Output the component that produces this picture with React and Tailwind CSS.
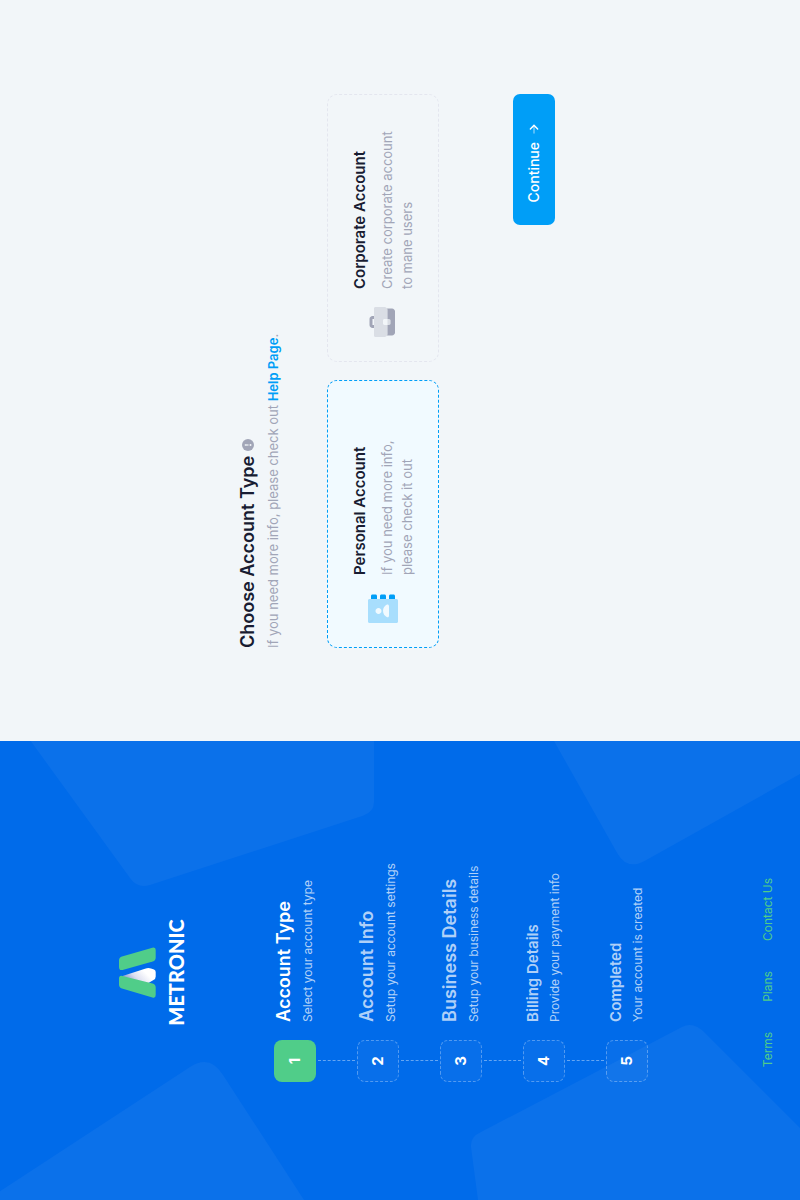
import { useState } from 'react';

const steps = [
  { title: 'Account Type', text: 'Select your account type' },
  { title: 'Account Info', text: 'Setup your account settings' },
  { title: 'Business Details', text: 'Setup your business details' },
  { title: 'Billing Details', text: 'Provide your payment info', small: true },
  { title: 'Completed', text: 'Your account is created', small: true },
];

function Backdrop() {
  return (
    <svg
      className="absolute inset-0 h-full w-full"
      viewBox="0 0 459 800"
      preserveAspectRatio="xMidYMid slice"
      fill="#ffffff"
      fillOpacity="0.045"
      aria-hidden="true"
    >
      <path d="M459 30.7L322 130Q311 137.7 315 150L384.3 363Q388 374 398 374H459Z" />
      <path d="M8.7 0L133 190Q146 210 125 223L0 304V0Z" />
      <path d="M0 478L53 471Q63 470 68 481L173 682Q179 693.5 167 705L72 800H0Z" />
      <path d="M459 554L346.7 617.3Q329.3 627.2 339.3 645L426 800H459Z" />
    </svg>
  );
}

function Logo() {
  return (
    <a href="#home" className="flex flex-col items-center gap-2 text-white">
      <svg className="h-[37px] w-[51px]" viewBox="0 0 51 37" aria-hidden="true">
        <defs>
          <linearGradient id="fold" x1="14" y1="12" x2="27" y2="25" gradientUnits="userSpaceOnUse">
            <stop offset="0" stopColor="#8f9fd0" />
            <stop offset="0.45" stopColor="#dcdff0" />
            <stop offset="1" stopColor="#ffffff" />
          </linearGradient>
        </defs>
        <path
          d="M21.5 2L29.3 26Q30.5 29.500 29.500 32L28.500 35Q27.800 36.700 26 36.700H21.500Q19 36.700 18 34.500L13 26Z"
          fill="url(#fold)"
        />
        <path
          d="M13.500 0H19.500Q22.800 0 22 3.500L14.600 33.500Q13.800 36.700 10.500 36.700H3Q-.500 36.700 .500 33.400L9.500 3Q10.500 0 13.500 0Z"
          fill="#50cd89"
        />
        <path
          d="M31 0H37.500Q40.500 0 41.400 3L50.300 33.400Q51.200 36.700 48 36.700H40.500Q37.400 36.700 36.500 33.700L28.100 3.600Q27.200 0 31 0Z"
          fill="#50cd89"
        />
      </svg>
      <span className="font-[Lato,sans-serif] text-xl leading-6 font-black">METRONIC</span>
    </a>
  );
}

function Step({ step, number, last }) {
  const active = number === 1;
  return (
    <li className="flex gap-[18px]">
      <div className="flex flex-col items-center">
        <span
          className={
            'flex size-[42px] items-center justify-center rounded-lg text-[15px] font-bold text-white ' +
            (active ? 'bg-[#50cd89]' : 'border border-dashed border-white/30 bg-white/[0.03]')
          }
        >
          {number}
        </span>
        {!last && <span className="my-0.5 h-[37px] border-l border-dashed border-white/40" />}
      </div>
      <div className="flex h-[42px] flex-col justify-center gap-0.5 whitespace-nowrap">
        <h3
          className={
            'font-semibold ' +
            (step.small ? 'text-[15px] leading-5 ' : 'text-lg leading-6 ') +
            (active ? 'text-white' : 'text-white/70')
          }
        >
          {step.title}
        </h3>
        <p className="text-xs leading-5 text-white/70">{step.text}</p>
      </div>
    </li>
  );
}

function BookIcon() {
  return (
    <svg className="size-9 shrink-0 fill-current" viewBox="0 0 24 24" aria-hidden="true">
      <path d="M20 14H18V10H20C20.6 10 21 10.4 21 11V13C21 13.6 20.6 14 20 14ZM21 19V17C21 16.4 20.6 16 20 16H18V20H20C20.6 20 21 19.6 21 19ZM21 7V5C21 4.4 20.6 4 20 4H18V8H20C20.6 8 21 7.6 21 7Z" />
      <path
        opacity="0.3"
        d="M17 22H3C2.4 22 2 21.6 2 21V3C2 2.4 2.4 2 3 2H17C17.6 2 18 2.4 18 3V21C18 21.6 17.6 22 17 22ZM10 7C8.9 7 8 7.9 8 9C8 10.1 8.9 11 10 11C11.1 11 12 10.1 12 9C12 7.9 11.1 7 10 7ZM13.3 16C14 16 14.5 15.3 14.3 14.7C13.7 13.2 12 12 10.1 12C8.1 12 6.5 13.1 5.9 14.7C5.6 15.3 6.2 16 6.9 16H13.3Z"
      />
    </svg>
  );
}

function BriefcaseIcon() {
  return (
    <svg className="size-9 shrink-0 fill-current" viewBox="0 0 24 24" aria-hidden="true">
      <path
        opacity="0.3"
        d="M20 15H4C2.9 15 2 14.1 2 13V7C2 6.4 2.4 6 3 6H21C21.6 6 22 6.4 22 7V13C22 14.1 21.1 15 20 15ZM13 12H11C10.5 12 10 12.4 10 13V16C10 16.5 10.4 17 11 17H13C13.6 17 14 16.6 14 16V13C14 12.4 13.6 12 13 12Z"
      />
      <path d="M14 6V5H10V6H8V5C8 3.9 8.9 3 10 3H14C15.1 3 16 3.9 16 5V6H14ZM20 15H14V16C14 16.6 13.5 17 13 17H11C10.5 17 10 16.6 10 16V15H4C3.6 15 3.3 14.9 3 14.7V18C3 19.1 3.9 20 5 20H19C20.1 20 21 19.1 21 18V14.7C20.7 14.9 20.4 15 20 15Z" />
    </svg>
  );
}

function ArrowIcon() {
  return (
    <svg className="size-4 fill-current" viewBox="0 0 24 24" aria-hidden="true">
      <rect opacity="0.5" x="5" y="11" width="13" height="2" rx="1" />
      <path d="M15.4343 12.5657L11.25 16.75C10.8358 17.1642 10.8358 17.8358 11.25 18.25C11.6642 18.6642 12.3358 18.6642 12.75 18.25L18.2929 12.7071C18.6834 12.3166 18.6834 11.6834 18.2929 11.2929L12.75 5.75C12.3358 5.33579 11.6642 5.33579 11.25 5.75C10.8358 6.16421 10.8358 6.83579 11.25 7.25L15.4343 11.4343C15.7467 11.7467 15.7467 12.2533 15.4343 12.5657Z" />
    </svg>
  );
}

function AccountCard({ value, selected, onSelect, icon, title, lines }) {
  const on = selected === value;
  return (
    <label
      className={
        'flex flex-1 cursor-pointer items-center gap-[15px] rounded-[10px] border border-dashed px-[21px] py-[21px] ' +
        (on ? 'border-[#009ef7] bg-[#f1faff] text-[#009ef7]' : 'border-[#e4e6ef] text-[#a1a5b7]')
      }
    >
      <input
        type="radio"
        name="account_type"
        value={value}
        checked={on}
        onChange={() => onSelect(value)}
        className="sr-only"
      />
      {icon}
      <span className="block">
        <span className="mb-1.5 block text-[15px] leading-[22px] font-semibold text-[#181c32]">{title}</span>
        <span className="block text-[13px] leading-5 text-[#a1a5b7]">
          {lines[0]}
          <br />
          {lines[1]}
        </span>
      </span>
    </label>
  );
}

export default function App() {
  const [type, setType] = useState('personal');
  return (
    <div className="h-screen w-screen overflow-hidden bg-[#f2f6f9]">
      <div className="flex h-[100vw] w-[100vh] origin-top-left translate-y-[100vh] -rotate-90 font-[Inter,sans-serif]">
        <aside className="relative w-[459px] shrink-0 overflow-hidden bg-[#006bea]">
          <Backdrop />
          <div className="relative flex h-full flex-col items-center pt-[119px] pr-1 pb-6">
            <Logo />
            <ol className="mt-[86px]">
              {steps.map((step, i) => (
                <Step key={step.title} step={step} number={i + 1} last={i === steps.length - 1} />
              ))}
            </ol>
            <nav className="mt-auto flex gap-[30px] text-xs leading-4 text-[#50cd89]">
              <a href="#terms">Terms</a>
              <a href="#plans">Plans</a>
              <a href="#contact">Contact Us</a>
            </nav>
          </div>
        </aside>

        <main className="flex flex-1 flex-col pt-[236px] pr-[94px] pl-[93px]">
          <h1 className="flex items-center gap-[5px] text-lg leading-6 font-semibold text-[#181c32]">
            Choose Account Type
            <svg className="size-3" viewBox="0 0 12 12" aria-hidden="true">
              <circle cx="6" cy="6" r="6" fill="#a1a5b7" />
              <path d="M5.200 2.800H6.800L6.500 6.600H5.500Z" fill="#f2f6f9" />
              <circle cx="6" cy="8.500" r="1" fill="#f2f6f9" />
            </svg>
          </h1>
          <p className="mt-[3px] text-[13px] leading-5 text-[#a1a5b7]">
            If you need more info, please check out{' '}
            <a href="#help" className="font-semibold text-[#009ef7]">
              Help Page
            </a>
            .
          </p>

          <div className="mt-11 flex gap-[18px]">
            <AccountCard
              value="personal"
              selected={type}
              onSelect={setType}
              icon={<BookIcon />}
              title="Personal Account"
              lines={['If you need more info,', 'please check it out']}
            />
            <AccountCard
              value="corporate"
              selected={type}
              onSelect={setType}
              icon={<BriefcaseIcon />}
              title="Corporate Account"
              lines={['Create corporate account', 'to mane users']}
            />
          </div>

          <button
            type="button"
            className="mt-[74px] flex h-[42px] items-center gap-[5px] self-end rounded-[7px] bg-[#009ef7] pr-[27px] pl-[22px] text-sm font-medium text-white"
          >
            Continue
            <ArrowIcon />
          </button>
        </main>
      </div>
    </div>
  );
}
